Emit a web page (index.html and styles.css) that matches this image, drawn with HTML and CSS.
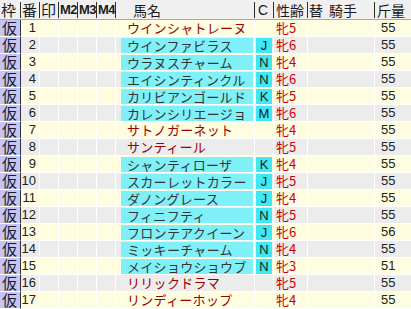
FILE: index.html
```html
<!DOCTYPE html>
<html lang="ja">
<head>
<meta charset="utf-8">
<link rel="stylesheet" href="styles.css">
</head>
<body>
<div class="table">
  <div class="row head">
    <div class="h">枠</div>
    <div class="h">番</div>
    <div class="h">印</div>
    <div class="h m">M2</div>
    <div class="h m">M3</div>
    <div class="h m">M4</div>
    <div class="h name-h">馬名</div>
    <div class="h c-h">C</div>
    <div class="h sa-h">性齢</div>
    <div class="h jk-h"><span>替</span><span class="jk">騎手</span></div>
    <div class="h kg-h">斤量</div>
  </div>

  <div class="row odd"><div class="waku">仮</div><div class="num">1</div><div></div><div></div><div></div><div></div><div class="name plain">ウインシャトレーヌ</div><div class="c"></div><div class="sa">牝5</div><div></div><div class="kg">55</div></div>
  <div class="row even"><div class="waku">仮</div><div class="num">2</div><div></div><div></div><div></div><div></div><div class="name"><span class="fill">ウインファビラス</span></div><div class="c"><span class="badge">J</span></div><div class="sa">牝6</div><div></div><div class="kg">55</div></div>
  <div class="row odd"><div class="waku">仮</div><div class="num">3</div><div></div><div></div><div></div><div></div><div class="name"><span class="fill">ウラヌスチャーム</span></div><div class="c"><span class="badge">N</span></div><div class="sa">牝4</div><div></div><div class="kg">55</div></div>
  <div class="row even"><div class="waku">仮</div><div class="num">4</div><div></div><div></div><div></div><div></div><div class="name"><span class="fill">エイシンティンクル</span></div><div class="c"><span class="badge">N</span></div><div class="sa">牝6</div><div></div><div class="kg">55</div></div>
  <div class="row odd"><div class="waku">仮</div><div class="num">5</div><div></div><div></div><div></div><div></div><div class="name"><span class="fill">カリビアンゴールド</span></div><div class="c"><span class="badge">K</span></div><div class="sa">牝5</div><div></div><div class="kg">55</div></div>
  <div class="row even"><div class="waku">仮</div><div class="num">6</div><div></div><div></div><div></div><div></div><div class="name"><span class="fill">カレンシリエージョ</span></div><div class="c"><span class="badge">M</span></div><div class="sa">牝6</div><div></div><div class="kg">55</div></div>
  <div class="row odd"><div class="waku">仮</div><div class="num">7</div><div></div><div></div><div></div><div></div><div class="name plain">サトノガーネット</div><div class="c"></div><div class="sa">牝4</div><div></div><div class="kg">55</div></div>
  <div class="row even"><div class="waku">仮</div><div class="num">8</div><div></div><div></div><div></div><div></div><div class="name plain">サンティール</div><div class="c"></div><div class="sa">牝5</div><div></div><div class="kg">55</div></div>
  <div class="row odd"><div class="waku">仮</div><div class="num">9</div><div></div><div></div><div></div><div></div><div class="name"><span class="fill">シャンティローザ</span></div><div class="c"><span class="badge">K</span></div><div class="sa">牝4</div><div></div><div class="kg">55</div></div>
  <div class="row even"><div class="waku">仮</div><div class="num">10</div><div></div><div></div><div></div><div></div><div class="name"><span class="fill">スカーレットカラー</span></div><div class="c"><span class="badge">J</span></div><div class="sa">牝5</div><div></div><div class="kg">55</div></div>
  <div class="row odd"><div class="waku">仮</div><div class="num">11</div><div></div><div></div><div></div><div></div><div class="name"><span class="fill">ダノングレース</span></div><div class="c"><span class="badge">J</span></div><div class="sa">牝4</div><div></div><div class="kg">55</div></div>
  <div class="row even"><div class="waku">仮</div><div class="num">12</div><div></div><div></div><div></div><div></div><div class="name"><span class="fill">フィニフティ</span></div><div class="c"><span class="badge">N</span></div><div class="sa">牝5</div><div></div><div class="kg">55</div></div>
  <div class="row odd"><div class="waku">仮</div><div class="num">13</div><div></div><div></div><div></div><div></div><div class="name"><span class="fill">フロンテアクイーン</span></div><div class="c"><span class="badge">J</span></div><div class="sa">牝6</div><div></div><div class="kg">56</div></div>
  <div class="row even"><div class="waku">仮</div><div class="num">14</div><div></div><div></div><div></div><div></div><div class="name"><span class="fill">ミッキーチャーム</span></div><div class="c"><span class="badge">N</span></div><div class="sa">牝4</div><div></div><div class="kg">55</div></div>
  <div class="row odd"><div class="waku">仮</div><div class="num">15</div><div></div><div></div><div></div><div></div><div class="name"><span class="fill">メイショウショウブ</span></div><div class="c"><span class="badge">N</span></div><div class="sa">牝3</div><div></div><div class="kg">51</div></div>
  <div class="row even"><div class="waku">仮</div><div class="num">16</div><div></div><div></div><div></div><div></div><div class="name plain">リリックドラマ</div><div class="c"></div><div class="sa">牝5</div><div></div><div class="kg">55</div></div>
  <div class="row odd"><div class="waku">仮</div><div class="num">17</div><div></div><div></div><div></div><div></div><div class="name plain">リンディーホップ</div><div class="c"></div><div class="sa">牝4</div><div></div><div class="kg">55</div></div>
</div>
</body>
</html>
```

FILE: styles.css
```css
html, body {
  margin: 0;
  padding: 0;
  background: #ffffff;
}

body {
  width: 411px;
  height: 309px;
  overflow: hidden;
  font-family: "Noto Sans CJK JP", "Liberation Sans", sans-serif;
  color: #222222;
}

.table {
  display: flex;
  flex-direction: column;
}

.row {
  display: grid;
  grid-template-columns: 21px 19px 19px 19px 19px 19px 139px 19px 34px 67px 1fr;
}

.row > div {
  box-sizing: border-box;
  height: 17px;
  line-height: 16px;
  border-right: 1px solid #ffffff;
  border-bottom: 1px solid #ffffff;
  white-space: nowrap;
}

.row.odd { background: #fffde0; }
.row.even { background: #ececec; }

/* header */
.row.head {
  background: #f0f0f0;
  height: 20px;
  border-bottom: 1px solid #a8a8a8;
  box-sizing: border-box;
  padding-top: 2px;
}

.row.head > div.h {
  height: 16px;
  line-height: 16px;
  border-bottom: none;
  border-right: 1px solid #303030;
  font-size: 15px;
  color: #1a1a1a;
  padding-left: 1px;
}

.row.head > div.m {
  font-family: "Liberation Sans", sans-serif;
  font-weight: bold;
  font-size: 13px;
  padding-left: 1px;
  letter-spacing: -0.6px;
}

.row.head > div.name-h { padding-left: 17px; font-size: 14px; }
.row.head > div.c-h {
  font-family: "Liberation Sans", sans-serif;
  font-size: 14px;
  padding-left: 3px;
}
.row.head > div.sa-h { padding-left: 2px; font-size: 14px; }
.row.head > div.jk-h { padding-left: 1px; font-size: 14px; }
.row.head > div.kg-h { padding-left: 2px; font-size: 14px; border-right: none; }
.jk { margin-left: 6px; }

/* body cells */
.row > div.waku {
  background: #c6c6f4;
  border-right: 1px solid #303040;
  font-size: 15px;
  padding-left: 2px;
  color: #1a1a2a;
}

.row > div.num {
  font-family: "Liberation Sans", sans-serif;
  font-size: 13px;
  text-align: right;
  padding-right: 3px;
}

.row > div.name {
  font-size: 13px;
  letter-spacing: 0.3px;
  padding: 1px 1px 0 5px;
}

.row > div.name.plain {
  color: #9a0000;
  padding-left: 11px;
  padding-top: 0;
}

.fill {
  display: block;
  height: 15px;
  line-height: 15px;
  background: #80f0f8;
  color: #333333;
  padding-left: 6px;
}

.row > div.c {
  padding: 1px 1px 0 1px;
}

.badge {
  display: block;
  height: 15px;
  line-height: 15px;
  background: #40e8f4;
  font-family: "Liberation Sans", sans-serif;
  font-size: 13px;
  text-align: center;
  color: #202020;
}

.row > div.sa {
  color: #d00000;
  font-size: 13px;
  padding-left: 2px;
}

.row > div.kg {
  font-family: "Liberation Sans", sans-serif;
  font-size: 13px;
  padding-left: 6px;
  border-right: none;
}
```
